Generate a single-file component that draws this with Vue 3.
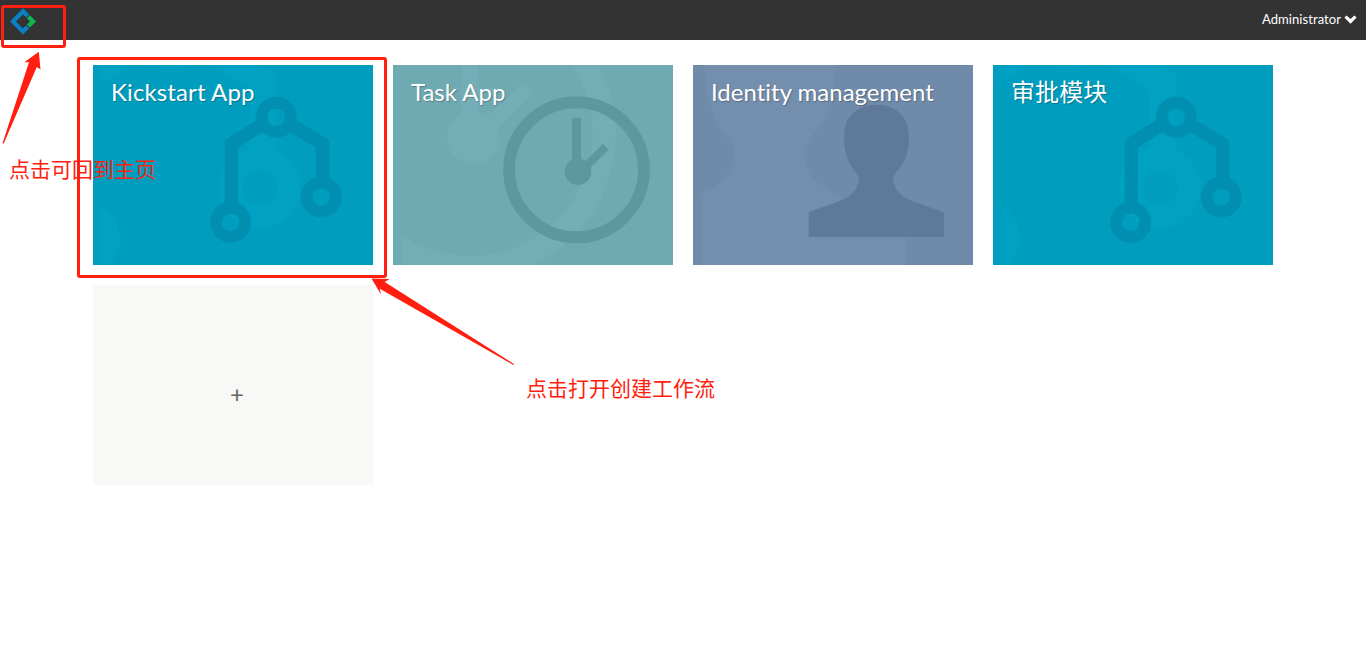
<script setup>
const apps = [
  { name: 'Kickstart App', icon: 'flow', theme: 'cyan' },
  { name: 'Task App', icon: 'clock', theme: 'teal' },
  { name: 'Identity management', icon: 'user', theme: 'slate' },
  { name: '审批模块', icon: 'flow', theme: 'cyan' },
]
const zoomed = {
  flow: 'translate(-289.6 -141.3) scale(2)',
  clock: 'translate(-288 -140) scale(1.99)',
  user: 'translate(-291.8 -141.7) scale(2.01)',
}
</script>

<template>
  <div class="page">
    <svg class="defs" width="0" height="0" aria-hidden="true">
      <defs>
        <g id="flow" fill="none" stroke="currentColor">
          <path d="M168 60.2 138.3 79V139M198.6 60.2 229.5 79V114" stroke-width="13.3" />
          <g stroke-width="11.7">
            <circle cx="183.3" cy="52.3" r="14.6" />
            <circle cx="228.3" cy="132" r="14.6" />
            <circle cx="137.7" cy="157.3" r="14.6" />
          </g>
        </g>
        <g id="clock" fill="currentColor">
          <circle cx="183.5" cy="104.8" r="67.4" fill="none" stroke="currentColor" stroke-width="11.8" />
          <circle cx="185" cy="106.7" r="13.3" />
          <path d="M179 53h9v42.500l5 0L210 78.700l5.700 6L195 105l-10 4-6-8z" />
        </g>
        <path
          id="user"
          fill="currentColor"
          d="M183.3 39.7C203 39.7 216 52 216 71.700C216 87 212.500 95.500 205.500 104.500C201.500 109.500 200.300 111 200.300 114C200.300 123 206 129.500 216 134.500C226 139.200 239 142.500 251 147.500V172H115.700V147.500C124 143.500 141 139 151 134C161 129 165.700 122 165.700 114C165.700 111 163.500 108.500 161 105C154.500 96 151 86 151 71.700C151 52 163.500 39.700 183.300 39.700Z"
        />
        <clipPath id="backdrop"><rect x="8" width="272" height="200" /></clipPath>
      </defs>
    </svg>

    <header class="navbar">
      <svg class="logo" width="28" height="28" viewBox="0 0 28 28">
        <path d="M18.700 8.100 14 3.400 4 13.400 14 23.400 18.700 18.700" fill="none" stroke="#0a7fc4" stroke-width="4.300" />
        <path d="M19.400 8.800 24 13.400 19.400 18" fill="none" stroke="#0cb653" stroke-width="4.300" />
      </svg>
      <div class="account">
        <span>Administrator</span>
        <svg width="13" height="9" viewBox="0 0 13 9">
          <path d="M.4 2.600 2.600.4 6.500 4 10.400.4 12.600 2.600 6.500 8.700z" fill="#fff" />
        </svg>
      </div>
    </header>

    <main class="apps">
      <article v-for="app in apps" :key="app.name" class="tile" :class="app.theme">
        <svg class="art" width="280" height="200" viewBox="0 0 280 200">
          <g clip-path="url(#backdrop)" class="light">
            <use :href="'#' + app.icon" :transform="zoomed[app.icon]" />
          </g>
          <use :href="'#' + app.icon" class="dark" />
        </svg>
        <h3>{{ app.name }}</h3>
      </article>
      <article class="tile add"><span>+</span></article>
    </main>

    <div class="mark mark-logo"></div>
    <div class="mark mark-kickstart"></div>
    <svg class="arrows" width="1366" height="657" viewBox="0 0 1366 657">
      <path d="M38.800 51.800 24.300 62.300 29 62.200 2.600 143 3.600 143.800 36.800 67 40.500 69.500z" />
      <path d="M371.500 278.600 389.500 279 384.700 282 514 364 513.500 365 379.800 288.700 381 294.500z" />
    </svg>
    <p class="note note-home">点击可回到主页</p>
    <p class="note note-create">点击打开创建工作流</p>
  </div>
</template>

<style>
body {
  background: #fff;
}
</style>

<style scoped>
.page {
  position: relative;
  width: 1366px;
  height: 657px;
  overflow: hidden;
  font-family: Lato, "Noto Sans CJK SC", sans-serif;
  font-variant-ligatures: none;
}
.defs {
  position: absolute;
}
.navbar {
  display: flex;
  justify-content: space-between;
  height: 40px;
  box-sizing: border-box;
  padding: 0 9px;
  background: #333;
}
.logo {
  margin-top: 7.500px;
}
.account {
  display: flex;
  align-items: center;
  gap: 3px;
  height: 38px;
  color: #fff;
  font-size: 13px;
  letter-spacing: 0.06px;
}
.apps {
  display: grid;
  grid-template-columns: repeat(4, 280px);
  grid-auto-rows: 200px;
  gap: 20px;
  padding: 25px 93px;
}
.tile {
  position: relative;
  overflow: hidden;
}
.art {
  position: absolute;
  inset: 0;
}
.tile h3 {
  position: relative;
  margin: 0;
  padding: 12px 18px;
  color: #fff;
  font-size: 24px;
  font-weight: 400;
  line-height: 30px;
  text-shadow: 1px 1px 1px rgba(0, 0, 0, 0.25);
}
.cyan {
  background: #009dbf;
}
.cyan h3 {
  letter-spacing: 0.12px;
}
.cyan .light {
  color: #00a1c2;
}
.cyan .dark {
  color: #008eb1;
}
.teal {
  background: #6fa9b2;
}
.teal .light {
  color: #73adb6;
}
.teal .dark {
  color: #5e989f;
}
.slate {
  background: #708aaa;
}
.slate .light {
  color: #748eae;
}
.slate .dark {
  color: #5f7999;
}
.add {
  display: flex;
  align-items: center;
  justify-content: center;
  box-sizing: border-box;
  padding: 16px 0 0 8px;
  background: #f8f8f7;
  color: #666;
  font-size: 24px;
}
.mark {
  position: absolute;
  box-sizing: border-box;
  border: 3px solid #ff1e10;
  border-radius: 3px;
}
.mark-logo {
  left: 1px;
  top: 5px;
  width: 65px;
  height: 43px;
}
.mark-kickstart {
  left: 77px;
  top: 57px;
  width: 310px;
  height: 221px;
}
.arrows {
  position: absolute;
  left: 0;
  top: 0;
  fill: #ff1e10;
}
.note {
  position: absolute;
  margin: 0;
  color: #ff1e10;
  font-family: "Noto Sans CJK SC", sans-serif;
  font-size: 21px;
  font-weight: 400;
  line-height: 30px;
  white-space: nowrap;
}
.note-home {
  left: 9px;
  top: 153px;
}
.note-create {
  left: 526px;
  top: 372px;
}
</style>
